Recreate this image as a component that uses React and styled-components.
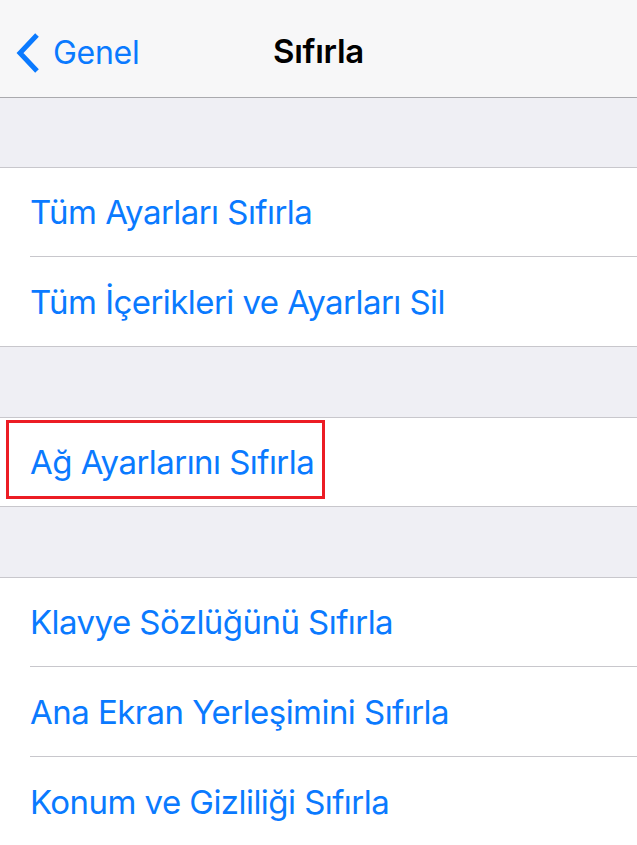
import React from 'react';
import styled, { createGlobalStyle } from 'styled-components';

const GlobalStyle = createGlobalStyle`
   html, body {
      margin: 0;
      padding: 0;
      background: #ffffff;
   }
   body {
      font-family: 'Inter', 'Liberation Sans', sans-serif;
   }
`;

const sections = [
   ['Tüm Ayarları Sıfırla', 'Tüm İçerikleri ve Ayarları Sil'],
   ['Ağ Ayarlarını Sıfırla'],
   [
      'Klavye Sözlüğünü Sıfırla',
      'Ana Ekran Yerleşimini Sıfırla',
      'Konum ve Gizliliği Sıfırla',
   ],
];

const App = () => {
   return (
      <>
         <GlobalStyle />
         <Screen>
            <NavBar>
               <BackButton>
                  <svg width="27" height="42" viewBox="0 0 27 42">
                     <path
                        d="M23 3 L6 21 L23 39"
                        fill="none"
                        stroke="#0a7aff"
                        strokeWidth="5"
                     />
                  </svg>
                  <BackLabel>Genel</BackLabel>
               </BackButton>
               <Title>Sıfırla</Title>
            </NavBar>
            {sections.map((rows, i) => (
               <React.Fragment key={i}>
                  <Spacer first={i === 0} />
                  <Group>
                     {rows.map((label, j) => (
                        <Row
                           key={label}
                           first={j === 0}
                           last={j === rows.length - 1}
                        >
                           <RowLabel
                              highlighted={label === 'Ağ Ayarlarını Sıfırla'}
                           >
                              {label}
                           </RowLabel>
                        </Row>
                     ))}
                  </Group>
               </React.Fragment>
            ))}
         </Screen>
      </>
   );
};

const Screen = styled.div`
   width: 637px;
   height: 845px;
   overflow: hidden;
   background: #ffffff;
`;

const NavBar = styled.div`
   position: relative;
   height: 97px;
   background: #f7f7f8;
   border-bottom: 1px solid #aaaaae;
   display: flex;
   align-items: center;
   justify-content: center;
`;

const BackButton = styled.div`
   position: absolute;
   left: 14px;
   top: 32px;
   display: flex;
   align-items: center;
   gap: 12px;
   color: #0a7aff;
`;

const BackLabel = styled.span`
   font-size: 32px;
   letter-spacing: -0.3px;
   line-height: 42px;
`;

const Title = styled.div`
   font-size: 33px;
   font-weight: 600;
   color: #000;
   letter-spacing: -0.3px;
   margin-top: 4px;
`;

const Spacer = styled.div`
   height: ${(p) => (p.first ? '69px' : '70px')};
   background: #efeff4;
   border-bottom: 1px solid #c8c7cc;
`;

const Group = styled.div`
   background: #ffffff;
   border-bottom: 1px solid #c8c7cc;
`;

const Row = styled.div`
   height: ${(p) => (p.first ? '88px' : '89px')};
   margin-left: 30px;
   display: flex;
   align-items: stretch;
   border-bottom: ${(p) => (p.last ? 'none' : '1px solid #c8c7cc')};
`;

const RowLabel = styled.span`
   position: relative;
   display: flex;
   align-items: center;
   font-size: 33px;
   color: #0a7aff;
   letter-spacing: -0.55px;

   ${(p) =>
      p.highlighted &&
      `
      &::before {
         content: '';
         position: absolute;
         left: -24px;
         right: -11px;
         top: 2px;
         bottom: 7px;
         border: 3px solid #ec1c24;
      }
   `}
`;

export default App;
